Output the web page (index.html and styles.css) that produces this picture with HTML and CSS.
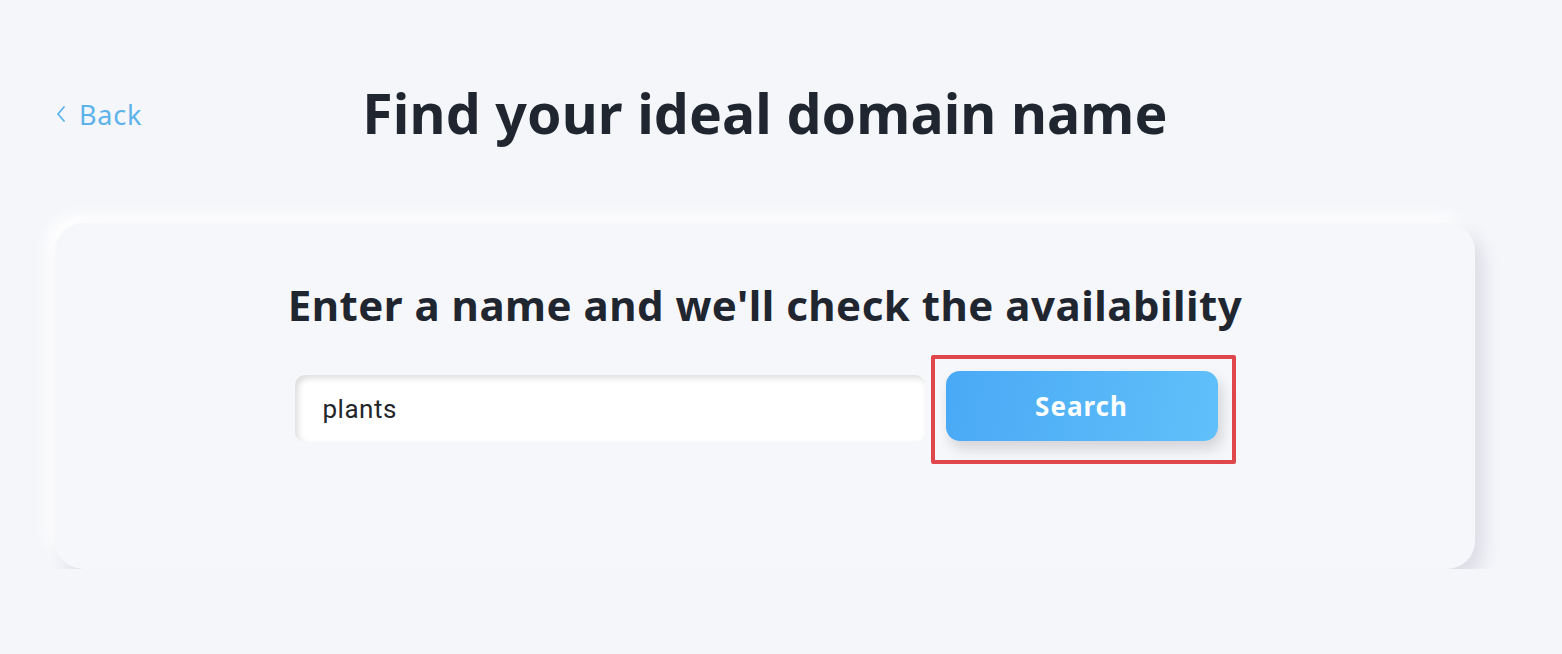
FILE: index.html
```html
<!DOCTYPE html>
<html lang="en">
<head>
  <meta charset="UTF-8">
  <title>Find your ideal domain name</title>
  <meta name="viewport" content="width=device-width, initial-scale=1.0">
  <link rel="stylesheet" href="styles.css">
</head>
<body>
  <div class="page">
    <header class="top">
      <a class="back" href="#">
        <svg width="12" height="18" viewBox="0 0 12 18" aria-hidden="true">
          <path d="M9 2 L3 9 L9 16" fill="none" stroke="currentColor" stroke-width="1.8" stroke-linecap="round" stroke-linejoin="round"/>
        </svg>
        Back
      </a>
      <h1>Find your ideal domain name</h1>
      <span></span>
    </header>

    <section class="card">
      <h2>Enter a name and we'll check the availability</h2>
      <form class="search-row" onsubmit="return false">
        <input class="domain" type="text" value="plants">
        <div class="highlight">
          <button type="submit">Search</button>
        </div>
      </form>
    </section>
  </div>
</body>
</html>
```
FILE: styles.css
```css
body {
  margin: 0;
  background: #f5f6fa;
  color: #1f2630;
  font-family: "Noto Sans", "Open Sans", sans-serif;
}
.page {
  width: 1420px;
  margin-left: 55px;
  padding-top: 80px;
}
.top {
  display: grid;
  grid-template-columns: 1fr auto 1fr;
  align-items: center;
}
.back {
  display: flex;
  align-items: center;
  gap: 12px;
  color: #5cb3ea;
  text-decoration: none;
  font-size: 27px;
  letter-spacing: 0.8px;
  margin-top: 2px;
}
h1 {
  margin: 0;
  font-size: 55.4px;
  font-weight: 700;
  letter-spacing: 0.1px;
  line-height: 1.2;
}
.card {
  margin-top: 77px;
  height: 346px;
  box-sizing: border-box;
  border-radius: 28px;
  background: #f6f7fb;
  box-shadow: 8px 10px 18px rgba(30, 40, 70, 0.12), -8px -8px 16px #ffffff;
  padding-top: 55px;
  text-align: center;
}
h2 {
  margin: 0;
  font-size: 42px;
  font-weight: 700;
  letter-spacing: 0.5px;
  line-height: 1.3;
}
.search-row {
  display: flex;
  justify-content: center;
  align-items: flex-start;
  gap: 6px;
  margin-top: 22px;
}
.domain {
  width: 630px;
  height: 67px;
  margin-top: 20px;
  box-sizing: border-box;
  border: none;
  border-radius: 10px;
  background: #fff;
  box-shadow: inset 3px 3px 6px rgba(0, 0, 0, 0.14), inset -3px -3px 6px #ffffff;
  padding: 0 28px;
  font-family: Roboto, sans-serif;
  font-size: 26px;
  letter-spacing: 0.5px;
  color: #23262b;
  outline: none;
}
.highlight {
  border: 4px solid #e0474c;
  border-radius: 2px;
  padding: 12px 14px 19px 11px;
}
button {
  display: block;
  width: 272px;
  height: 70px;
  border: none;
  border-radius: 14px;
  background: linear-gradient(100deg, #4aa9f5, #5fc0fa);
  box-shadow: 4px 8px 14px rgba(0, 0, 0, 0.14);
  color: #fff;
  font-family: "Noto Sans", sans-serif;
  font-size: 26px;
  font-weight: 700;
  letter-spacing: 1px;
  cursor: pointer;
}
```
